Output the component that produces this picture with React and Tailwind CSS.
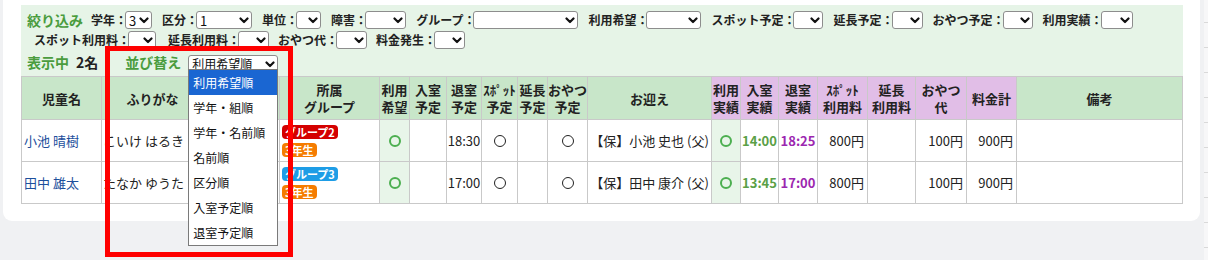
import React from 'react';

const Chevron = () => (
  <svg width="10" height="7" viewBox="0 0 10 7" className="shrink-0">
    <path d="M1.5 1.5 L5 5 L8.5 1.5" fill="none" stroke="#111" strokeWidth="2.2" strokeLinecap="round" strokeLinejoin="round" />
  </svg>
);

const Sel = ({ w, value = '', size = 'text-[13px]' }) => (
  <span className={`inline-flex items-center justify-between h-[18px] ${w} bg-white border border-[#8d8d8d] rounded-[3px] pl-[3px] pr-[2px]`}>
    <span className={`${size} leading-none font-normal text-[#111] whitespace-nowrap`}>{value}</span>
    <Chevron />
  </span>
);

const Field = ({ label, w, value, ml = 'ml-[10px]' }) => (
  <span className={`inline-flex items-center ${ml}`}>
    <span className="text-[12px] font-bold text-[#222] leading-none whitespace-nowrap mr-[-2px]">{label}：</span>
    <Sel w={w} value={value} />
  </span>
);

const GreenRing = () => <span className="w-[12px] h-[12px] rounded-full border-2 border-[#4caf50]" />;
const BlackRing = () => <span className="w-[12px] h-[12px] rounded-full border-[1.5px] border-[#222]" />;

const cols = 'grid-cols-[80px_102px_76px_100px_30px_37px_35px_36px_30px_40px_124px_29px_38px_39px_50px_48px_51px_50px_166px]';

const headers = [
  ['児童名', 'g'], ['ふりがな', 'g'], ['', 'g'], ['所属\nグループ', 'g'], ['利用\n希望', 'g'],
  ['入室\n予定', 'g'], ['退室\n予定', 'g'], ['ｽﾎﾟｯﾄ\n予定', 'g'], ['延長\n予定', 'g'], ['おやつ\n予定', 'g'],
  ['お迎え', 'g'], ['利用\n実績', 'p'], ['入室\n実績', 'p'], ['退室\n実績', 'p'], ['ｽﾎﾟｯﾄ\n利用料', 'p'],
  ['延長\n利用料', 'p'], ['おやつ\n代', 'p'], ['料金計', 'p'], ['備考', 'g'],
];

const children = [
  { name: '小池 晴樹', kana: 'こいけ はるき', group: 'グループ2', groupCls: 'bg-[#d40000]', out: '18:30', pick: '【保】小池 史也 (父)', inT: '14:00', outT: '18:25' },
  { name: '田中 雄太', kana: 'たなか ゆうた', group: 'グループ3', groupCls: 'bg-[#1e9de6]', out: '17:00', pick: '【保】田中 康介 (父)', inT: '13:45', outT: '17:00' },
];

const cell = 'border-r border-b border-[#c9c9c9] flex items-center text-[13px]';

const sortOptions = ['利用希望順', '学年・組順', '学年・名前順', '名前順', '区分順', '入室予定順', '退室予定順'];

export default function App() {
  return (
    <div className="relative w-[1208px] h-[260px] overflow-hidden bg-[#f0f1f3] flex" style={{ fontFamily: '"Noto Sans CJK JP", "Noto Sans", sans-serif' }}>
      <div className="ml-[3px] w-[1197px] h-[221px] bg-white rounded-b-[9px] pt-[5px] pl-[18px] pr-[17px]">
        {/* filters */}
        <div className="bg-[#e6f4e7] pt-[6px] pb-[5px] pl-[6px]">
          <div className="flex items-center h-[18px]">
            <span className="text-[14px] font-bold text-[#4a9c3e] leading-none mr-[-2px]">絞り込み</span>
            <Field label="学年" w="w-[27px]" value="3" />
            <Field label="区分" w="w-[56px]" value="1" />
            <Field label="単位" w="w-[25px]" />
            <Field label="障害" w="w-[41px]" />
            <Field label="グループ" w="w-[105px]" />
            <Field label="利用希望" w="w-[55px]" />
            <Field label="スポット予定" w="w-[30px]" />
            <Field label="延長予定" w="w-[31px]" />
            <Field label="おやつ予定" w="w-[30px]" />
            <Field label="利用実績" w="w-[32px]" />
          </div>
          <div className="flex items-center h-[18px] mt-[2px]">
            <Field label="スポット利用料" w="w-[28px]" ml="ml-[7px]" />
            <Field label="延長利用料" w="w-[31px]" ml="ml-[12px]" />
            <Field label="おやつ代" w="w-[31px]" ml="ml-[9px]" />
            <Field label="料金発生" w="w-[31px]" ml="ml-[9px]" />
          </div>
          <div className="flex items-center h-[18px] mt-[4px]">
            <span className="text-[14px] font-bold text-[#4a9c3e] leading-none">表示中</span>
            <span className="text-[14px] font-bold text-[#222] leading-none ml-[7px]">2名</span>
            <span className="text-[14px] font-bold text-[#4a9c3e] leading-none ml-[27px]">並び替え</span>
            <span className="relative ml-[7px]">
              <Sel w="w-[90px]" value="利用希望順" size="text-[12px]" />
              <div className="absolute left-0 top-[19px] w-[90px] bg-white border border-[#7a7a7a] z-10">
                {sortOptions.map((o, i) => (
                  <div key={o} className={`h-[25px] flex items-center pl-[4px] text-[12px] whitespace-nowrap ${i === 0 ? 'bg-[#1a66d2] text-white' : 'text-[#111]'}`}>{o}</div>
                ))}
              </div>
            </span>
          </div>
        </div>

        {/* table */}
        <div className={`grid ${cols} border-l border-t border-[#c9c9c9]`}>
          {headers.map(([t, c], i) => (
            <div key={i} className={`${cell} h-[43px] justify-center text-center font-bold leading-[17px] whitespace-pre text-[#222] ${c === 'p' ? 'bg-[#e1bee7]' : 'bg-[#c8e6c9]'}`}>{t}</div>
          ))}
          {children.map((r) => (
            <React.Fragment key={r.name}>
              <div className={`${cell} h-[42px] pl-[2px] text-[#1d4f9c]`}>{r.name}</div>
              <div className={`${cell} pl-[1px] whitespace-nowrap text-[#222]`}>{r.kana}</div>
              <div className={cell}></div>
              <div className={`${cell} flex-col !items-start justify-center gap-[4px] pl-[2px]`}>
                <span className={`${r.groupCls} text-white text-[11px] font-bold leading-[14px] h-[14px] px-[3px] rounded-[4px]`}>{r.group}</span>
                <span className="bg-[#f57c00] text-white text-[11px] font-bold leading-[14px] h-[14px] px-[3px] rounded-[4px]">3年生</span>
              </div>
              <div className={`${cell} justify-center bg-[#e8f5e9]`}><GreenRing /></div>
              <div className={cell}></div>
              <div className={`${cell} justify-center text-[#222]`}>{r.out}</div>
              <div className={`${cell} justify-center`}><BlackRing /></div>
              <div className={cell}></div>
              <div className={`${cell} justify-center`}><BlackRing /></div>
              <div className={`${cell} justify-center whitespace-nowrap text-[#222]`}>{r.pick}</div>
              <div className={`${cell} justify-center bg-[#e8f5e9]`}><GreenRing /></div>
              <div className={`${cell} justify-center font-bold text-[#5aa046]`}>{r.inT}</div>
              <div className={`${cell} justify-center font-bold text-[#9c27b0]`}>{r.outT}</div>
              <div className={`${cell} justify-end pr-[3px] text-[#222]`}>800円</div>
              <div className={cell}></div>
              <div className={`${cell} justify-end pr-[3px] text-[#222]`}>100円</div>
              <div className={`${cell} justify-end pr-[3px] text-[#222]`}>900円</div>
              <div className={cell}></div>
            </React.Fragment>
          ))}
        </div>
      </div>

      {/* neighbouring panel edge */}
      <div className="ml-[4px] flex-1 bg-[#f7f7f8]">
        {Array.from({ length: 11 }).map((_, i) => (
          <div key={i} className={`${i === 0 ? 'h-[23px]' : 'h-[25px]'} border-b border-[#d9d9d9]`} />
        ))}
      </div>

      {/* annotation frame */}
      <div className="absolute left-[105px] top-[46px] w-[188px] h-[211px] border-[5px] border-[#ff0000] z-20 pointer-events-none" />
    </div>
  );
}
